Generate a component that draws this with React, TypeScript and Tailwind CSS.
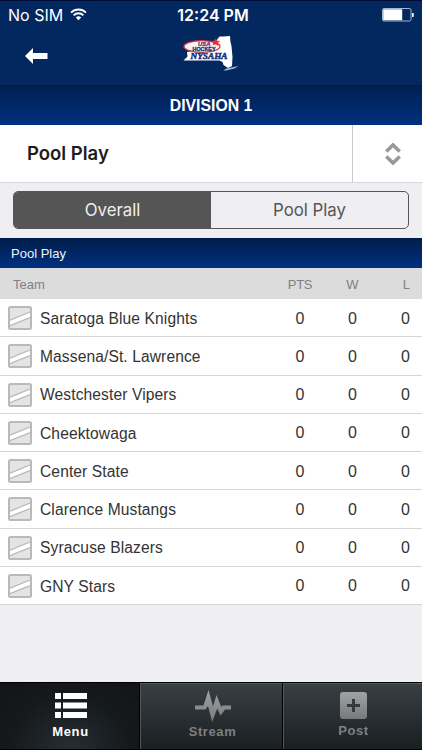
import type { ReactNode } from 'react';
import { clsx } from 'clsx';

type Standing = {
  team: string;
  pts: number;
  wins: number;
  losses: number;
};

const STANDINGS: Standing[] = [
  { team: 'Saratoga Blue Knights', pts: 0, wins: 0, losses: 0 },
  { team: 'Massena/St. Lawrence', pts: 0, wins: 0, losses: 0 },
  { team: 'Westchester Vipers', pts: 0, wins: 0, losses: 0 },
  { team: 'Cheektowaga', pts: 0, wins: 0, losses: 0 },
  { team: 'Center State', pts: 0, wins: 0, losses: 0 },
  { team: 'Clarence Mustangs', pts: 0, wins: 0, losses: 0 },
  { team: 'Syracuse Blazers', pts: 0, wins: 0, losses: 0 },
  { team: 'GNY Stars', pts: 0, wins: 0, losses: 0 },
];

function WifiIcon() {
  return (
    <svg width="17" height="13" viewBox="0 0 17 13" fill="none" stroke="#fff" strokeWidth="1.8">
      <path d="M1 4.6a10.6 10.6 0 0 1 15 0" />
      <path d="M3.6 7.3a6.9 6.9 0 0 1 9.8 0" />
      <path d="M8.5 12.2 5.8 9.5a3.9 3.9 0 0 1 5.4 0Z" fill="#fff" stroke="none" />
    </svg>
  );
}

function BatteryIcon() {
  return (
    <svg width="32" height="14" viewBox="0 0 32 14">
      <rect x="0.5" y="0.5" width="28.5" height="12.5" rx="1.5" fill="none" stroke="#a9b5cd" />
      <rect x="1.2" y="1.3" width="19" height="11" rx="0.5" fill="#fff" />
      <path d="M30 5h.8q1 0 1 1v2q0 1-1 1H30Z" fill="#fff" />
    </svg>
  );
}

function LeagueLogo() {
  return (
    <svg width="60" height="42" viewBox="0 0 60 42">
      <path
        d="m3.500 26.500 4-4L7 18l7-1 13-2 8-3.500 1-4.500 3.500-4.500L43 2.500l7-.5.5 6 1 4 1 11-.5 9-4 2-4.500-3-1-3-3-1.500h-36Z"
        fill="#fff"
      />
      <path d="M43.500 36.500q2-2.500 5-2.500l10-2-4 2.500-8 2Z" fill="#a3b0cc" />
      <ellipse cx="22" cy="12.500" rx="18" ry="5.800" fill="#f6f2f6" stroke="#d6393f" strokeWidth="1.300" />
      <path d="m33 10.500 1-2-2-1 2.500-.4 1-2.100 1.200 2 2.800.3-2 1.500.7 2.500-2.300-1.200Z" fill="#e5352e" stroke="#e5352e" strokeWidth="0.800" />
      <text x="18" y="12" fontSize="5.800" textLength="12.500" lengthAdjust="spacingAndGlyphs" className="font-['Liberation_Sans'] font-bold italic" fill="#8c2b5a" stroke="#8c2b5a" strokeWidth="0.300">
        USA
      </text>
      <text x="12.500" y="17.200" fontSize="5" textLength="23" lengthAdjust="spacingAndGlyphs" className="font-['Liberation_Sans'] font-bold" fill="#15307a" stroke="#15307a" strokeWidth="0.300">
        HOCKEY
      </text>
      <text x="10.500" y="24.500" fontSize="7.200" textLength="37" lengthAdjust="spacingAndGlyphs" className="font-['Liberation_Serif'] font-bold italic" fill="#15307a" stroke="#15307a" strokeWidth="0.400">
        NYSAHA
      </text>
    </svg>
  );
}

function TeamBadge() {
  return (
    <svg className="shrink-0" width="24" height="24" viewBox="0 0 24 24">
      <rect x="1" y="1" width="22" height="22" rx="1.500" fill="#e4e4e4" />
      <path d="M2 14.700 22 6.500v5L2 19.500Z" fill="#fff" />
      <path d="M2 14.200 22 6M2 19.700 22 11.700" stroke="#bababa" strokeWidth="1.300" fill="none" />
      <rect x="1" y="1" width="22" height="22" rx="1.500" fill="none" stroke="#b9b9b9" strokeWidth="2" />
    </svg>
  );
}

function MenuIcon() {
  return (
    <svg width="32" height="26" viewBox="0 0 32 26" fill="#fff">
      <path d="M0 0h6v6H0zM8 0h24v6H8zM0 9.500h6v6H0zM8 9.500h24v6H8zM0 19h6v6H0zM8 19h24v6H8z" />
    </svg>
  );
}

function StreamIcon() {
  return (
    <svg width="36" height="32" viewBox="0 0 36 32">
      <defs>
        <linearGradient id="stream" x1="0" y1="0" x2="0" y2="1">
          <stop offset="0" stopColor="#a0a3a5" />
          <stop offset="1" stopColor="#77797b" />
        </linearGradient>
      </defs>
      <path
        d="M0 15.500h8.500L13.500 0l4.500 16.500L21.500 5l4.800 12 1.200-1.500H36v4h-6L25.500 25.500l-3.300-7L17.200 32l-4.200-16-2.500 3.500H0Z"
        fill="url(#stream)"
      />
    </svg>
  );
}

function PostIcon() {
  return (
    <svg width="27" height="27" viewBox="0 0 27 27">
      <defs>
        <linearGradient id="post" x1="0" y1="0" x2="0" y2="1">
          <stop offset="0" stopColor="#a0a3a5" />
          <stop offset="1" stopColor="#77797b" />
        </linearGradient>
      </defs>
      <rect width="27" height="27" rx="3" fill="url(#post)" />
      <path d="M13.500 7v13M7 13.500h13" stroke="#34393c" strokeWidth="3" />
    </svg>
  );
}

function StatusBar() {
  return (
    <div className="grid h-[30px] grid-cols-3 items-center border-t border-[#000c35] pr-2 pb-[2px] pl-2 font-[Inter,sans-serif] text-white">
      <div className="flex items-center gap-[7px] text-[16px]">
        No SIM
        <WifiIcon />
      </div>
      <div className="pl-1 text-center text-[16px] font-semibold whitespace-nowrap">12:24 PM</div>
      <div className="flex justify-end">
        <BatteryIcon />
      </div>
    </div>
  );
}

function Header() {
  return (
    <header className="h-[85px] bg-[#03275f]">
      <StatusBar />
      <div className="flex items-start pl-[25px]">
        <svg className="mt-[18px]" width="23" height="17" viewBox="0 0 23 17" fill="#fff">
          <path d="M0 8 8 0v5h14.500v6H8v5Z" />
        </svg>
        <div className="mt-1 ml-[132px]">
          <LeagueLogo />
        </div>
      </div>
    </header>
  );
}

function StandingRow({ item }: { item: Standing }) {
  return (
    <li className="flex h-[38.250px] items-center border-b border-[#d5d5d5] bg-white pt-px pl-2 text-[15.600px] text-[#333]">
      <TeamBadge />
      <span className="ml-2 flex-1 pt-px tracking-[0.1px]">{item.team}</span>
      <span className="w-[52px] pt-px text-center text-base">{item.pts}</span>
      <span className="w-[53px] pt-px text-center text-base">{item.wins}</span>
      <span className="w-[43px] pt-px pr-3 text-right text-base">{item.losses}</span>
    </li>
  );
}

type TabProps = {
  label: string;
  icon: ReactNode;
  active?: boolean;
  className: string;
};

function Tab({ label, icon, active, className }: TabProps) {
  return (
    <button
      className={clsx(
        'flex flex-col items-center',
        active
          ? 'bg-[radial-gradient(ellipse_at_bottom,#272e33_0%,#15191c_60%,#121517_100%)] text-white'
          : 'border-t border-l border-[#51575b] bg-linear-to-b from-[#394044] to-[#1a1f22] text-[#7d8083]',
        className,
      )}
    >
      <span className="flex h-9 items-center">{icon}</span>
      <span className="text-[13px] leading-[15px] font-bold tracking-[0.6px]">{label}</span>
    </button>
  );
}

export default function App() {
  return (
    <div className="flex h-[750px] w-[422px] flex-col overflow-hidden bg-[#efeef3] font-['Liberation_Sans',sans-serif]">
      <Header />
      <div className="flex h-10 items-center justify-center border-t border-[#001c50] bg-linear-to-b from-[#00204f] to-[#003081] text-[15.800px] font-bold text-white">
        DIVISION 1
      </div>

      <div className="flex h-[57.500px] border-b border-[#d8d8dc] bg-white font-[Inter,sans-serif]">
        <div className="flex flex-1 items-center pt-px pl-[27px] text-[18.500px] font-semibold text-[#1c1c22]">Pool Play</div>
        <div className="flex w-[70px] items-center justify-center border-l border-[#c8c8cc] pt-px pl-[10px]">
          <svg width="16" height="24" viewBox="0 0 16 24" fill="none" stroke="#999" strokeWidth="3.600">
            <path d="m1.300 9.500 6.700-6.500 6.700 6.500M1.300 14.500 8 21l6.700-6.500" />
          </svg>
        </div>
      </div>

      <div className="h-[55.500px] px-[13px] pt-2">
        <div className="flex h-[38.500px] overflow-hidden rounded-[5px] border border-[#555] font-[Inter,sans-serif] text-[16.800px]">
          <button className="flex-1 bg-[#555] pt-px text-[#eee]">Overall</button>
          <button className="flex-1 pt-px text-[#555]">Pool Play</button>
        </div>
      </div>

      <div className="flex h-[30px] items-center bg-linear-to-b from-[#001d4a] to-[#003081] pt-[2px] pl-[11px] text-[13px] text-[#eef3fb]">
        Pool Play
      </div>
      <div className="flex h-[31px] items-center bg-[#dcdcdc] pt-[2px] pl-[13px] text-[13px] text-[#808086]">
        <span className="flex-1">Team</span>
        <span className="w-[52px] text-center tracking-[-0.3px]">PTS</span>
        <span className="w-[53px] text-center">W</span>
        <span className="w-[43px] pr-3 text-right">L</span>
      </div>
      <ul>
        {STANDINGS.map((item) => (
          <StandingRow key={item.team} item={item} />
        ))}
      </ul>

      <nav className="mt-auto flex h-[68px] border-y border-black bg-black">
        <Tab label="Menu" icon={<MenuIcon />} active className="w-[139px] pt-[5px] pl-[2px]" />
        <Tab label="Stream" icon={<StreamIcon />} className="ml-px w-[142px] pt-[4px] pl-[2px]" />
        <Tab label="Post" icon={<PostIcon />} className="ml-px flex-1 pt-[3px] pl-px" />
      </nav>
    </div>
  );
}
